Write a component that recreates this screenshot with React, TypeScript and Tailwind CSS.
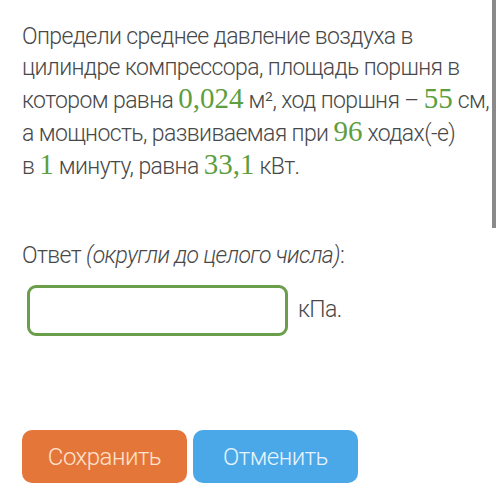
export default function App() {
  const num = "font-['Liberation_Serif',serif] text-[29px] text-[#5e9e3e] tracking-normal";
  return (
    <div className="relative h-[498px] w-[500px] overflow-hidden bg-white font-['Roboto',sans-serif] font-light text-[#484848]">
      <div className="absolute right-[4px] top-0 h-[228px] w-[4px] bg-[#8a8a8a]" />
      <div className="px-[22px] pt-[21px]">
        <p className="whitespace-nowrap text-[23px] leading-[31px] tracking-[-0.6px]">
          Определи среднее давление воздуха в
          <br />
          цилиндре компрессора, площадь поршня в
          <br />
          котором равна <span className={num}>0,024</span> м², ход поршня – <span className={num}>55</span> см,
          <br />
          а мощность, развиваемая при <span className={num}>96</span> ходах(-е)
          <br />
          в <span className={num}>1</span> минуту, равна <span className={num}>33,1</span> кВт.
        </p>
        <p className="mt-[58px] text-[23px] leading-[31px] tracking-[-0.6px]">
          Ответ <i>(округли до целого числа)</i>:
        </p>
        <div className="mt-[14px] flex items-center gap-[10px] pl-[5px]">
          <div className="h-[51px] w-[261px] rounded-[9px] border-[3px] border-[#6a9e4a] bg-white" />
          <span className="text-[23px] tracking-[-0.6px]">кПа.</span>
        </div>
        <div className="mt-[94px] flex gap-[6px]">
          <button className="h-[53px] w-[165px] rounded-[10px] bg-[#e5763a] text-[24px] font-light tracking-[-0.5px] text-[#fde3cf]">
            Сохранить
          </button>
          <button className="h-[53px] w-[165px] rounded-[10px] bg-[#4aa8e8] text-[24px] font-light tracking-[-0.5px] text-[#e8f4fd]">
            Отменить
          </button>
        </div>
      </div>
    </div>
  );
}
